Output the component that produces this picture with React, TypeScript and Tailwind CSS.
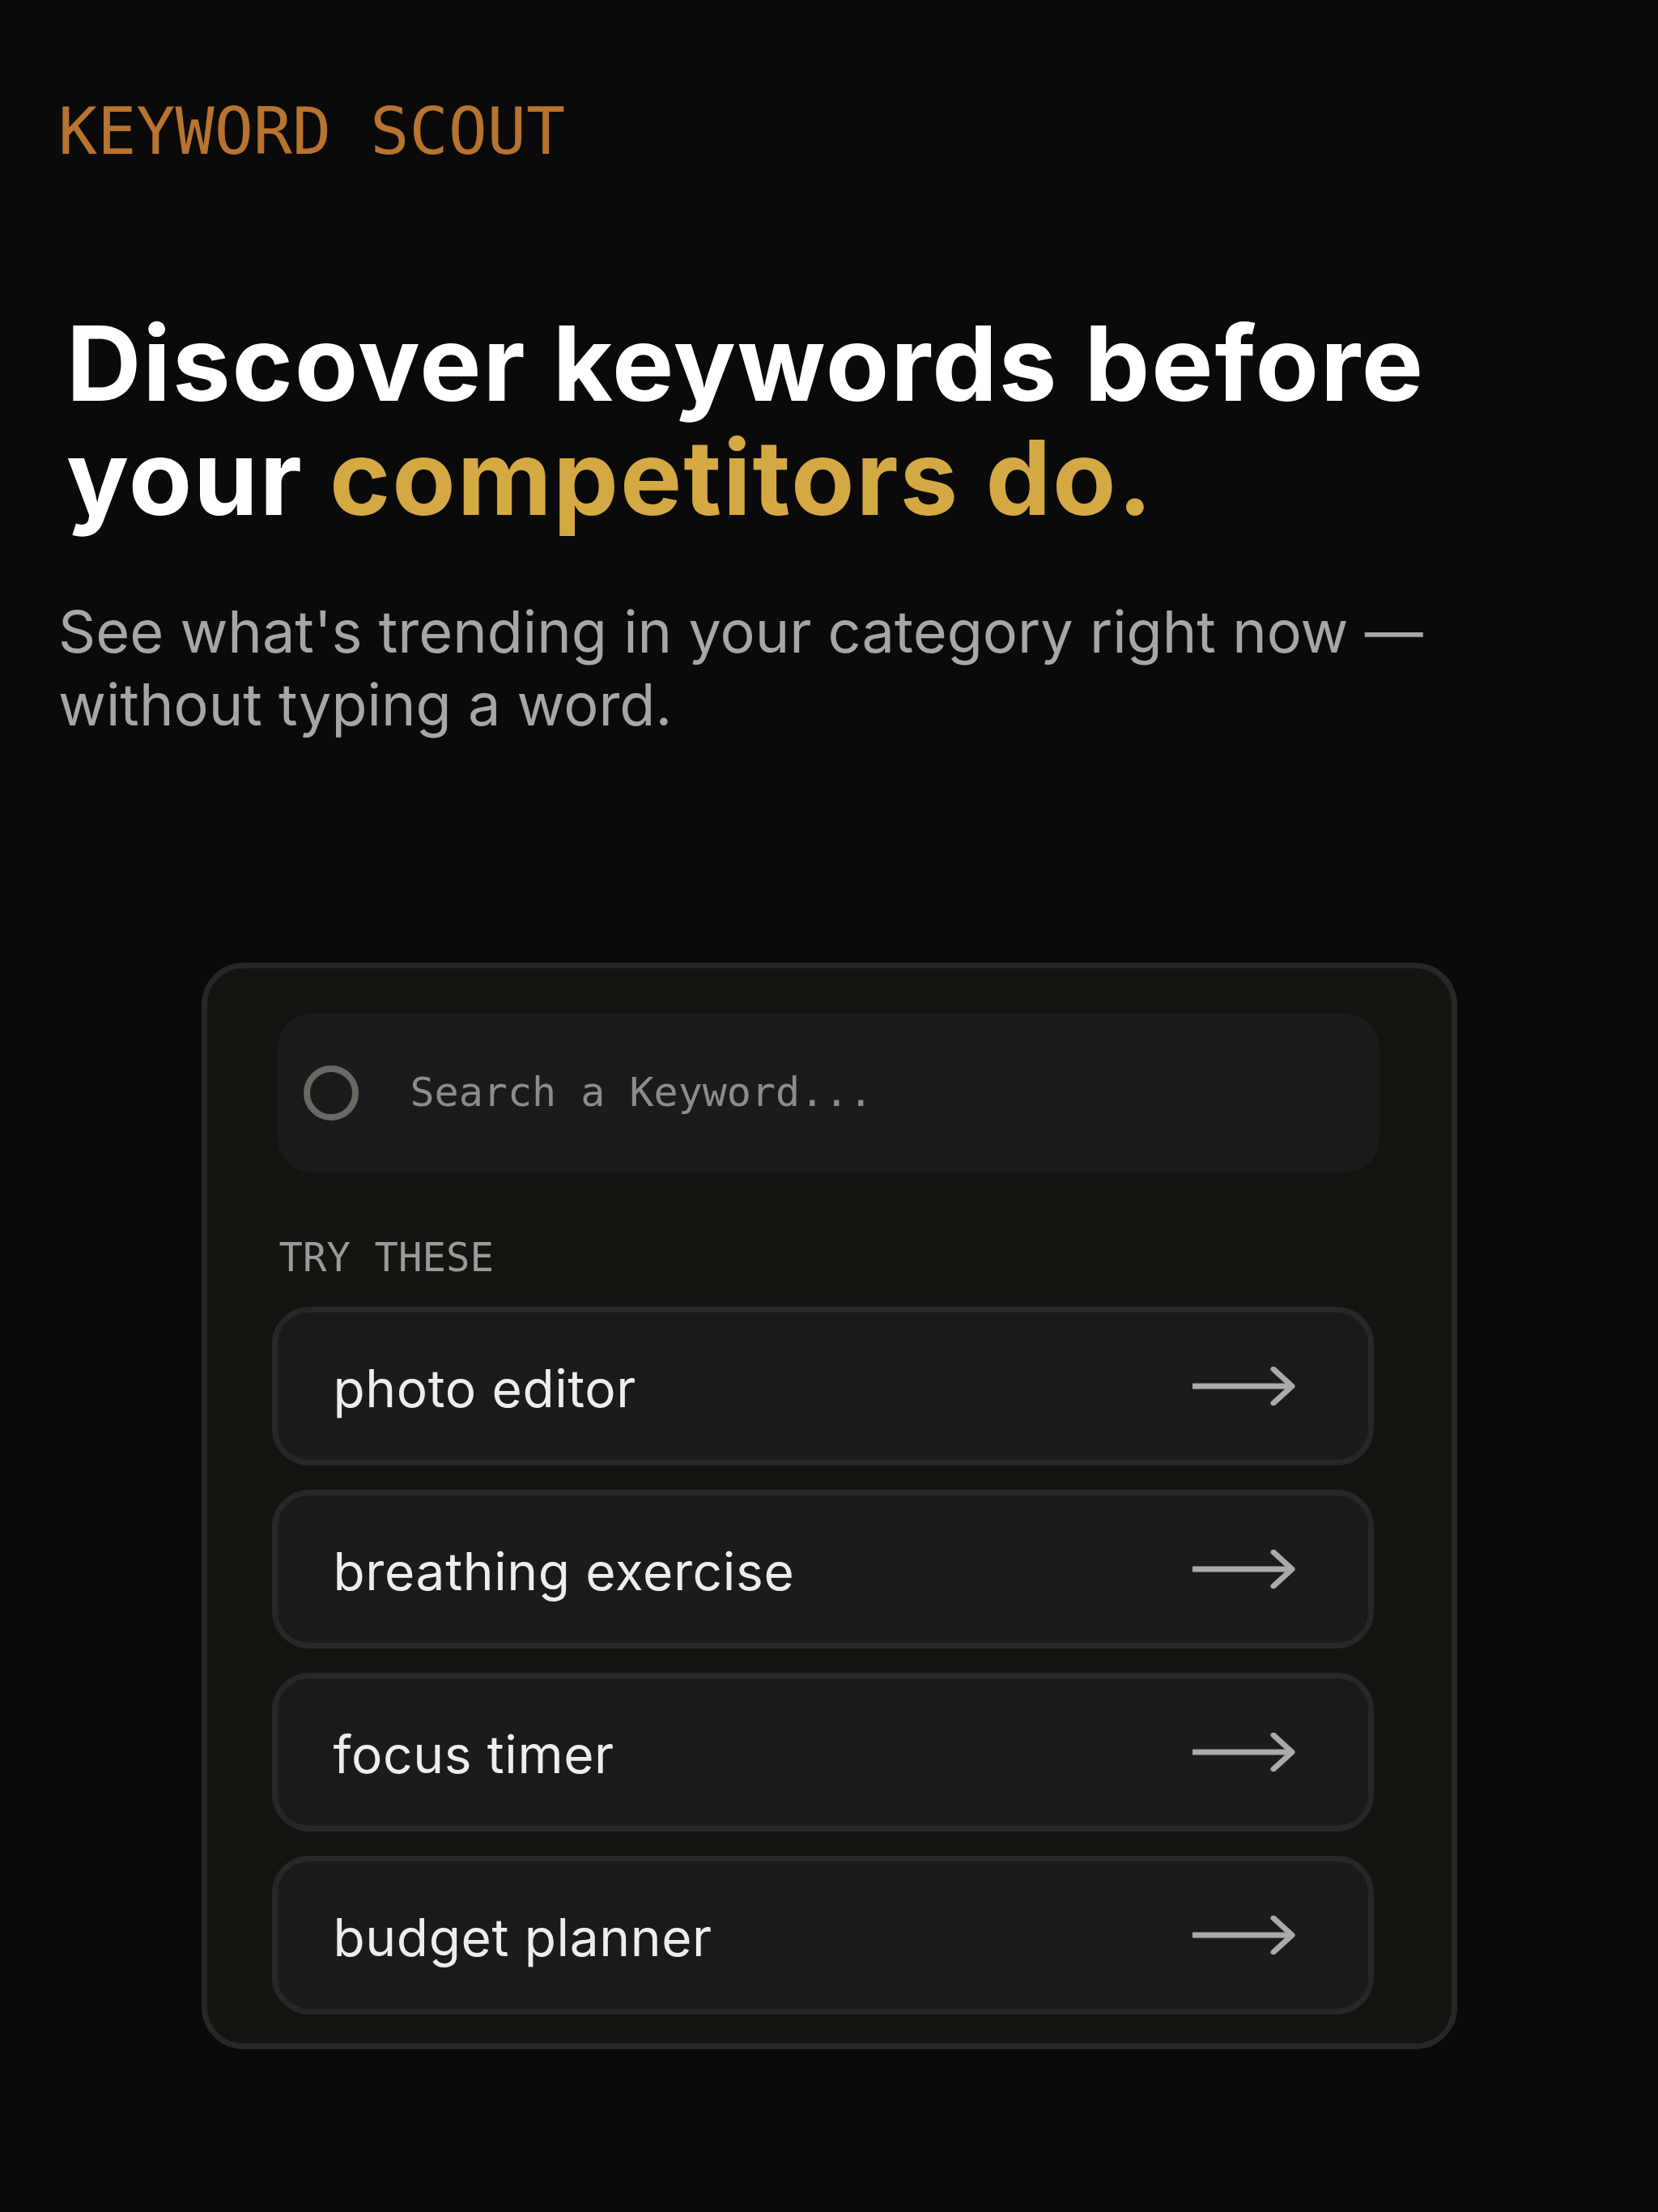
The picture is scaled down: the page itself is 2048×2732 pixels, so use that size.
import { useState } from 'react';

const suggestions = ['photo editor', 'breathing exercise', 'focus timer', 'budget planner'];

const mono = { fontFamily: '"DejaVu Sans Mono", "Liberation Mono", monospace' };
const sans = { fontFamily: 'Inter, "Noto Sans", sans-serif' };

function ArrowRight() {
  return (
    <svg width="128" height="48" viewBox="0 0 128 48" fill="none" className="shrink-0">
      <path d="M1 24 H124" stroke="#aaaaaa" strokeWidth="7" />
      <path d="M101 3 L124 24 L101 45" stroke="#aaaaaa" strokeWidth="7" strokeLinecap="round" strokeLinejoin="round" />
    </svg>
  );
}

export default function App() {
  const [query, setQuery] = useState('');

  return (
    <div className="min-h-[2732px] w-full bg-[#0a0a0a] pt-[123px] pb-[200px]" style={sans}>
      <div className="px-[72px]">
        <h2 className="text-[80px] leading-none text-[#b8732e]" style={mono}>
          KEYWORD SCOUT
        </h2>

        <h1 className="ml-[10px] mt-[176px] text-[128px] font-bold leading-[1.1] tracking-[0.015em] text-white">
          Discover keywords before
          <br />
          your <span className="text-[#d4a843]">competitors do.</span>
        </h1>

        <p className="mt-[74px] text-[72px] leading-[90px] text-[#a6a6a6]">
          See what's trending in your category right now —
          <br />
          without typing a word.
        </p>
      </div>

      <div className="mx-auto mt-[274px] w-[1551px] rounded-[52px] border-[7px] border-[#272727] bg-[#141411] pt-[56px] pb-[36px]">
        <div className="ml-[87px] flex h-[196px] w-[1361px] items-center gap-[64px] rounded-[42px] bg-[#1b1b1b] px-[32px]">
          <div className="h-[68px] w-[68px] shrink-0 rounded-full border-[8px] border-[#6b6762]" />
          <input
            value={query}
            onChange={(e) => setQuery(e.target.value)}
            placeholder="Search a Keyword..."
            className="flex-1 bg-transparent text-[50px] text-[#d8d8d8] placeholder:text-[#8c8c8c] focus:outline-none"
            style={mono}
          />
        </div>

        <p className="ml-[89px] mt-[81px] text-[49px] leading-none text-[#9a9a9a]" style={mono}>
          TRY THESE
        </p>

        <div className="ml-[80px] mt-[36px] flex w-[1361px] flex-col gap-[30px]">
          {suggestions.map((s) => (
            <button
              key={s}
              className="flex h-[196px] items-center justify-between rounded-[46px] border-[7px] border-[#272727] bg-[#1b1b1b] pl-[69px] pr-[90px] text-left"
            >
              <span className="pt-[6px] text-[64px] tracking-[0.01em] text-[#ededed]">{s}</span>
              <ArrowRight />
            </button>
          ))}
        </div>
      </div>
    </div>
  );
}
